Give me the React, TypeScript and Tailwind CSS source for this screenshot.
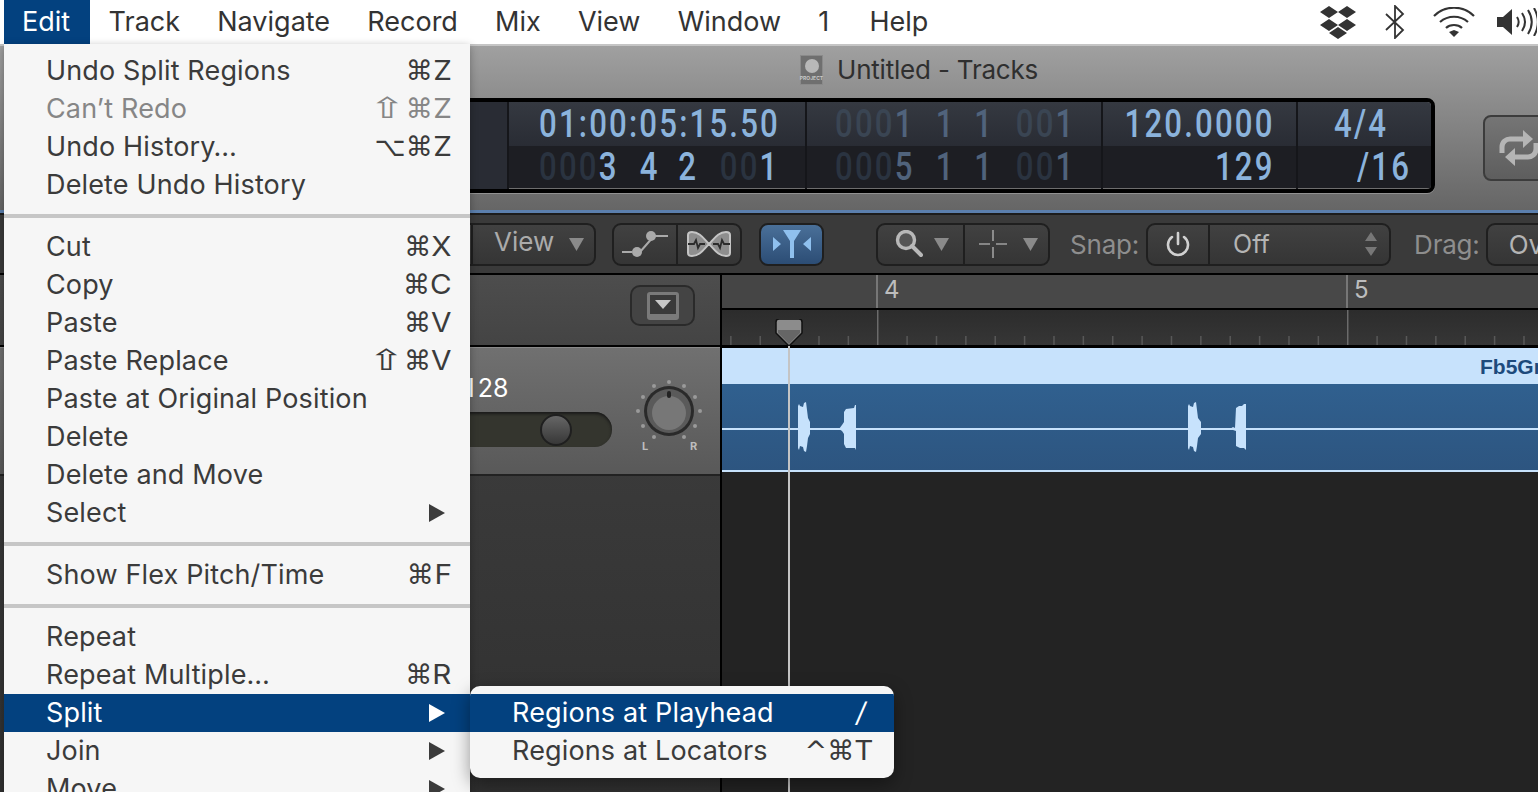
import React from 'react';

const ui = "font-['Inter','Noto_Sans',sans-serif]";
const lcd = "font-['Roboto',sans-serif]";

const topMenus = ['Track', 'Navigate', 'Record', 'Mix', 'View', 'Window', '1', 'Help'];

type MenuRow = { label: string; keys?: string; disabled?: boolean; arrow?: boolean; active?: boolean };

const groups: MenuRow[][] = [
  [
    { label: 'Undo Split Regions', keys: '⌘Z' },
    { label: 'Can’t Redo', keys: '⇧⌘Z', disabled: true },
    { label: 'Undo History…', keys: '⌥⌘Z' },
    { label: 'Delete Undo History' },
  ],
  [
    { label: 'Cut', keys: '⌘X' },
    { label: 'Copy', keys: '⌘C' },
    { label: 'Paste', keys: '⌘V' },
    { label: 'Paste Replace', keys: '⇧⌘V' },
    { label: 'Paste at Original Position' },
    { label: 'Delete' },
    { label: 'Delete and Move' },
    { label: 'Select', arrow: true },
  ],
  [{ label: 'Show Flex Pitch/Time', keys: '⌘F' }],
  [
    { label: 'Repeat' },
    { label: 'Repeat Multiple…', keys: '⌘R' },
    { label: 'Split', arrow: true, active: true },
    { label: 'Join', arrow: true },
    { label: 'Move', arrow: true },
  ],
];

const Keys = ({ value }: { value: string }) => (
  <span className="flex items-center">
    {Array.from(value).map((ch, i) =>
      /[A-Z/]/.test(ch) ? (
        <span key={i} className="ml-[2px] scale-x-110 origin-right">{ch}</span>
      ) : ch === '⇧' ? (
        <span key={i} className="inline-block mr-[6px] font-['DejaVu_Sans',sans-serif] text-[29px] scale-x-[1.5]">{ch}</span>
      ) : (
        <span key={i} className="font-['DejaVu_Sans',sans-serif] text-[27px]">{ch}</span>
      )
    )}
  </span>
);

const Row = ({ row }: { row: MenuRow }) => (
  <div
    className={`h-[38px] shrink-0 pl-[42px] pr-[18px] flex items-center justify-between ${
      row.active ? 'bg-[#03417f] text-white' : row.disabled ? 'text-[#868686]' : 'text-[#3b3b3b]'
    }`}
  >
    <span>{row.label}</span>
    {row.keys && <Keys value={row.keys} />}
    {row.arrow && (
      <svg width="18" height="20" viewBox="0 0 18 20" className="mr-[6px]">
        <path d="M1 1l16 9-16 9z" fill={row.active ? '#fff' : '#3b3b3b'} />
      </svg>
    )}
  </div>
);

const EditMenu = () => (
  <div className={`absolute left-[4px] top-[44px] w-[466px] h-[760px] pt-[8px] bg-[#f6f6f6] text-[27px] tracking-[0.15px] flex flex-col overflow-hidden shadow-[0_2px_8px_rgba(0,0,0,0.3)] ${ui}`}>
    {groups.map((g, i) => (
      <React.Fragment key={i}>
        {i > 0 && (
          <div className="h-[24px] shrink-0 flex items-center">
            <div className="h-[4px] w-full bg-[#c6c6c6]" />
          </div>
        )}
        {g.map((r) => <Row key={r.label} row={r} />)}
      </React.Fragment>
    ))}
  </div>
);

const SubMenu = () => (
  <div className={`absolute left-[470px] top-[686px] w-[424px] h-[92px] pt-[8px] rounded-[10px] bg-[#f6f6f6] text-[27px] tracking-[0.15px] text-[#3b3b3b] shadow-[0_6px_18px_rgba(0,0,0,0.4)] overflow-hidden ${ui}`}>
    <div className="h-[38px] pl-[42px] pr-[28px] flex items-center justify-between bg-[#03417f] text-white">
      <span>Regions at Playhead</span>
      <span className="italic">/</span>
    </div>
    <div className="h-[38px] pl-[42px] pr-[20px] flex items-center justify-between">
      <span>Regions at Locators</span>
      <Keys value="^⌘T" />
    </div>
  </div>
);

const StatusIcons = () => (
  <div className="ml-auto flex items-center pr-[1px] text-[#333]">
    <svg width="38" height="34" viewBox="0 0 38 34" fill="#333">
      <path d="M10 1l9 6-9 6-9-6zM28 1l9 6-9 6-9-6zM10 14l9 6-9 6-9-6zM28 14l9 6-9 6-9-6zM19 22l9 6-9 6-9-6z" />
    </svg>
    <svg width="20" height="34" viewBox="0 0 20 34" fill="none" stroke="#333" strokeWidth="1.8" className="ml-[28px]">
      <path d="M1 9l17 16-8 8V1l8 8L1 25" />
    </svg>
    <svg width="42" height="30" viewBox="0 0 42 30" fill="none" stroke="#333" strokeWidth="2.2" className="ml-[28px]">
      <path d="M1 9c11-11 29-11 40 0M7 15c8-7 20-7 28 0M13 21c4-4 12-4 16 0" />
      <path d="M16 25l5-2 5 2-5 5z" fill="#333" stroke="none" />
    </svg>
    <svg width="40" height="28" viewBox="0 0 40 28" fill="none" stroke="#333" strokeWidth="2" className="ml-[22px]">
      <path d="M0 9h6l9-8v26l-9-8H0z" fill="#333" stroke="none" />
      <path d="M20 9c2 3 2 7 0 10M25 5c4 6 4 12 0 18M31 2c5 8 5 16 0 24M37 0c5 9 5 19 0 28" />
    </svg>
  </div>
);

const MenuBar = () => (
  <div className={`h-[44px] shrink-0 bg-white flex items-center text-[27px] text-[#333] ${ui}`}>
    <div className="ml-[4px] h-full w-[86px] pl-[18px] flex items-center bg-[#03417f] text-white">Edit</div>
    {topMenus.map((m) => (
      <div key={m} className={`px-[18.6px] ${m === 'Help' ? 'ml-[3px]' : ''}`}>{m}</div>
    ))}
    <StatusIcons />
  </div>
);

const Dim = ({ children }: { children: React.ReactNode }) => <span className="text-[#3a4553]">{children}</span>;
const DimLow = ({ children }: { children: React.ReactNode }) => <span className="text-[#2a3340]">{children}</span>;
const Mid = ({ children }: { children: React.ReactNode }) => <span className="text-[#50637c]">{children}</span>;

// LCD digits are narrower than any installed face, so the row gets squeezed horizontally
const LcdText = ({ children, right }: { children: React.ReactNode; right?: boolean }) => (
  <span className={`inline-block whitespace-pre scale-x-[0.8] tracking-[2.7px] ${right ? 'origin-right' : 'origin-left'}`}>{children}</span>
);

const LcdCell = ({ width, top, bottom, pad = '' }: { width: string; top: React.ReactNode; bottom: React.ReactNode; pad?: string }) => (
  <div className={`${width} shrink-0 flex flex-col border-r-2 border-[#15161a] last:border-r-0 text-[39px] font-medium leading-none text-[#8bb3dc]`}>
    <div className={`h-[44px] flex items-center bg-gradient-to-b from-[#353941] to-[#292c34] ${pad}`}>{top}</div>
    <div className={`h-[42px] flex items-center bg-[#1d1e23] ${pad}`}>{bottom}</div>
  </div>
);

const G1 = "inline-block w-[126px]";
const G2 = "inline-block w-[48px]";
const G3 = "inline-block w-[52px]";

const Lcd = () => (
  <div className={`ml-[430px] mt-[52px] w-[1005px] h-[95px] flex rounded-r-[8px] border-[4px] border-black overflow-hidden shadow-[0_1px_0_rgba(255,255,255,0.25)] ${lcd}`}>
    <div className="w-[75px] shrink-0 bg-[#292c34] border-r-2 border-[#15161a]" />
    <LcdCell
      width="w-[298px]"
      pad="pl-[30px]"
      top={<LcdText>01:00:05:15.50</LcdText>}
      bottom={
        <LcdText>
          <span className={G1}><DimLow>000</DimLow>3</span>
          <span className={G2}>4</span>
          <span className={G3}>2</span>
          <DimLow>00</DimLow>1
        </LcdText>
      }
    />
    <LcdCell
      width="w-[296px]"
      pad="pl-[28px]"
      top={
        <LcdText>
          <span className={G1}><Dim>000</Dim><Mid>1</Mid></span>
          <span className={G2}><Mid>1</Mid></span>
          <span className={G3}><Mid>1</Mid></span>
          <Dim>00</Dim><Mid>1</Mid>
        </LcdText>
      }
      bottom={
        <LcdText>
          <span className={G1}><DimLow>000</DimLow><Mid>5</Mid></span>
          <span className={G2}><Mid>1</Mid></span>
          <span className={G3}><Mid>1</Mid></span>
          <DimLow>00</DimLow><Mid>1</Mid>
        </LcdText>
      }
    />
    <LcdCell
      width="w-[195px]"
      pad="justify-end pr-[21px]"
      top={<LcdText right>120.0000</LcdText>}
      bottom={<LcdText right>129</LcdText>}
    />
    <LcdCell
      width="w-[133px]"
      top={<span className="pl-[36px]"><LcdText>4/4</LcdText></span>}
      bottom={<span className="pl-[59px]"><LcdText>/16</LcdText></span>}
    />
  </div>
);

const LoopIcon = () => (
  <svg width="44" height="38" viewBox="0 0 44 38" fill="none" stroke="#b5b5b5" strokeWidth="5">
    <path d="M5 24v-6c0-5 4-8 8-8h16M39 14v6c0 5-4 8-8 8H15" />
    <path d="M26 1l10 9-10 9zM18 19l-10 9 10 9z" fill="#b5b5b5" stroke="none" />
  </svg>
);

const TitleArea = () => (
  <div className="h-[166px] shrink-0 relative bg-gradient-to-b from-[#a0a0a0] to-[#666] border-t-2 border-[#c5c5c5] overflow-hidden">
    <div className={`absolute left-[800px] top-[4px] flex items-center text-[26px] tracking-[-0.2px] text-[#2f2f2f] ${ui}`}>
      <div className="w-[23px] h-[30px] mr-[14px] bg-[#6f6f6f] border border-[#8a8a8a] flex flex-col items-center pt-[3px]">
        <div className="w-[14px] h-[14px] rounded-full bg-[#b8b8b8] shrink-0" />
        <div className="mt-[2px] text-[5px] leading-[6px] tracking-normal font-bold text-[#c8c8c8]">PROJECT</div>
      </div>
      Untitled - Tracks
    </div>
    <Lcd />
    <div className="absolute left-[1483px] top-[69px] w-[80px] h-[66px] rounded-[8px] border-2 border-[#3c3c3c] bg-gradient-to-b from-[#757575] to-[#5e5e5e] pl-[12px] pt-[12px]">
      <LoopIcon />
    </div>
  </div>
);

const toolBtn = 'h-[43px] rounded-[9px] border-2 border-[#1f1f1f] bg-gradient-to-b from-[#414141] to-[#353535] flex items-center overflow-hidden shrink-0';
const Arrow = ({ className = '' }: { className?: string }) => (
  <svg width="15" height="14" viewBox="0 0 15 14" className={className}>
    <path d="M0 1h15L7.5 14z" fill="#8a8a8a" />
  </svg>
);

const Toolbar = () => (
  <div className={`h-[60px] shrink-0 bg-[#3a3a3a] border-t-2 border-[#1c1c1c] flex items-center pl-[430px] text-[26px] text-[#ababab] ${ui}`}>
    <div className={`${toolBtn} w-[166px]`}>
      <div className="w-[41px] h-full border-r-2 border-[#1f1f1f]" />
      <span className="ml-[21px] -mt-[5px]">View</span>
      <Arrow className="ml-[15px]" />
    </div>
    <div className={`${toolBtn} ml-[16px] w-[130px]`}>
      <div className="w-[64px] h-full border-r-2 border-[#1f1f1f] flex items-center justify-center">
        <svg width="46" height="32" viewBox="0 0 46 32" fill="none" stroke="#aaa" strokeWidth="2">
          <path d="M0 24h10M18 24l14-16M32 8h14" />
          <circle cx="15" cy="24" r="5" fill="#aaa" stroke="none" />
          <circle cx="29" cy="8" r="5" fill="#aaa" stroke="none" />
        </svg>
      </div>
      <div className="flex-1 flex items-center justify-center">
        <svg width="46" height="28" viewBox="0 0 46 28">
          <path d="M2 5q0-3 4-3c8 0 12 7 17 12-5 5-9 12-17 12q-4 0-4-3zM44 5q0-3-4-3c-8 0-12 7-17 12 5 5 9 12 17 12q4 0 4-3z" fill="#8e8e8e" stroke="#c4c4c4" strokeWidth="2" />
          <path d="M2 14h6l2-4 2 8 2-4h5M44 14h-6l-2-4-2 8-2-4h-5" stroke="#2c2c2c" strokeWidth="1.8" fill="none" />
        </svg>
      </div>
    </div>
    <div className="h-[43px] w-[65px] ml-[17px] rounded-[9px] border-2 border-[#1f1f1f] bg-gradient-to-b from-[#4a7099] to-[#2c4d75] flex items-center justify-center shrink-0">
      <svg width="38" height="28" viewBox="0 0 38 28" fill="#8fc0ee">
        <path d="M10 0h18l-7 11v17h-4V11zM0 7l8 7-8 7zM38 7l-8 7 8 7z" />
      </svg>
    </div>
    <div className={`${toolBtn} ml-[52px] w-[174px]`}>
      <div className="w-[87px] h-full border-r-2 border-[#1f1f1f] flex items-center pl-[17px]">
        <svg width="28" height="28" viewBox="0 0 28 28" fill="none" className="shrink-0">
          <circle cx="11" cy="10" r="8.5" fill="#555" stroke="#b8b8b8" strokeWidth="3.4" />
          <path d="M17 16l9 9" stroke="#b8b8b8" strokeWidth="4" strokeLinecap="round" />
        </svg>
        <Arrow className="ml-[11px]" />
      </div>
      <div className="flex-1 flex items-center pl-[14px]">
        <svg width="28" height="28" viewBox="0 0 28 28" stroke="#a0a0a0" strokeWidth="1.6" fill="none">
          <path d="M0 14h11M17 14h11M14 0v11M14 17v11" />
        </svg>
        <Arrow className="ml-[16px]" />
      </div>
    </div>
    <span className="ml-[20px] text-[#8e8e8e] tracking-[-0.2px]">Snap:</span>
    <div className={`${toolBtn} ml-[7px] w-[245px]`}>
      <div className="w-[62px] h-full border-r-2 border-[#1f1f1f] flex items-center justify-center">
        <svg width="24" height="26" viewBox="0 0 24 26" fill="none" stroke="#d0d0d0" strokeWidth="2.6" strokeLinecap="round">
          <path d="M12 2v11M6 6a10 10 0 1 0 12 0" />
        </svg>
      </div>
      <span className="ml-[23px] mt-[2px] text-[25px] text-[#b4b4b4]">Off</span>
      <svg width="12" height="24" viewBox="0 0 12 24" fill="#777" className="ml-auto mr-[12px]">
        <path d="M6 0l6 9H0zM6 24l6-9H0z" />
      </svg>
    </div>
    <span className="ml-[23px] text-[#8e8e8e] tracking-[-0.2px]">Drag:</span>
    <div className={`${toolBtn} ml-[6px] w-[120px] pl-[21px] text-[#b4b4b4]`}>Ov</div>
  </div>
);

const PanKnob = () => (
  <svg width="70" height="84" viewBox="0 0 70 84" className="shrink-0">
    {[[35,3],[20,7],[50,7],[9,18],[61,18],[4,32],[66,32],[9,47],[61,47],[20,58],[50,58]].map(([x, y]) => (
      <circle key={`${x}-${y}`} cx={x} cy={y} r="2" fill="#9a9a9a" />
    ))}
    <circle cx="35" cy="32" r="25" fill="#2a2a2a" />
    <circle cx="35" cy="32" r="22" fill="#5a5a5a" />
    <circle cx="35" cy="34" r="17" fill="#777" />
    <rect x="33" y="12" width="4" height="7" rx="2" fill="#222" />
    <text x="8" y="71" fontSize="11" fontWeight="700" fill="#bdbdbd" fontFamily="Inter">L</text>
    <text x="56" y="71" fontSize="11" fontWeight="700" fill="#bdbdbd" fontFamily="Inter">R</text>
  </svg>
);

const LeftPanel = () => (
  <div className="w-[722px] shrink-0 flex flex-col border-r-2 border-black bg-gradient-to-b from-[#404040] to-[#303030]">
    <div className="h-[72px] shrink-0 bg-gradient-to-b from-[#4d4d4d] to-[#444] flex items-center justify-end pr-[25px] border-b-2 border-black">
      <div className="w-[65px] h-[41px] -mt-[9px] rounded-[10px] border-2 border-[#2a2a2a] bg-[#444] flex items-center justify-center">
        <div className="w-[32px] h-[28px] rounded-[3px] bg-[#7a7a7a] pt-[3px] px-[3px] pb-[6px]">
          <div className="w-full h-full bg-[#3a3a3a] flex items-center justify-center">
            <svg width="16" height="9" viewBox="0 0 16 9"><path d="M0 0h16L8 9z" fill="#c8c8c8" /></svg>
          </div>
        </div>
      </div>
    </div>
    <div className="h-[129px] shrink-0 bg-gradient-to-b from-[#707070] to-[#595959] border-t border-[#8a8a8a] border-b-2 border-b-[#222] pl-[472px] pr-[16px] flex justify-between">
      <div className="flex flex-col w-[140px]">
        <span className={`mt-[25px] -ml-[4px] text-[25px] leading-[30px] text-white ${ui}`}><span className="mr-[3px]">I</span>28</span>
        <div className="mt-[9px] -ml-[10px] h-[35px] rounded-r-full bg-[#34352e] shadow-[inset_0_2px_3px_#1a1a1a] flex items-center justify-end pr-[40px]">
          <div className="w-[32px] h-[32px] rounded-full bg-gradient-to-b from-[#666] to-[#383838] border-2 border-[#1f1f1f]" />
        </div>
      </div>
      <div className="mt-[31px]">
        <PanKnob />
      </div>
    </div>
  </div>
);

const Ruler = () => (
  <div className="shrink-0">
    <div className={`h-[35px] bg-[#454545] border-b-2 border-black flex text-[24px] text-[#bdbdbd] ${ui}`}>
      <div className="w-[156px] shrink-0 border-r-2 border-[#777]" />
      <div className="w-[470px] shrink-0 pl-[6px] border-r-2 border-[#777] bg-[#484848] leading-[30px]">4</div>
      <div className="pl-[6px] leading-[30px]">5</div>
    </div>
    <div className="h-[38px] bg-gradient-to-b from-[#2c2c2c] to-[#363636] border-b-[3px] border-black">
      <svg width="816" height="35" viewBox="0 0 816 35" className="block">
        {Array.from({ length: 28 }, (_, i) => {
          const x = 8.1 + i * 29.375;
          const major = i % 16 === 5;
          return <rect key={i} x={x} y={major ? 0 : 26} width="1.5" height={major ? 35 : 9} fill={major ? '#6b6b6b' : '#585858'} />;
        })}
      </svg>
    </div>
  </div>
);

const Blob = ({ x, d }: { x: number; d: string }) => <path transform={`translate(${x} 0)`} d={d} fill="#c7e2fc" />;

const Region = () => (
  <div className="h-[124px] shrink-0 flex flex-col">
    <div className="h-[36px] shrink-0 bg-[#c7e2fc] whitespace-nowrap overflow-hidden pl-[758px] font-['Liberation_Sans',sans-serif] font-bold text-[21px] leading-[38px] text-[#1d4a7c]">
      Fb5Gr
    </div>
    <div className="flex-1 bg-gradient-to-b from-[#30608f] to-[#2d5580] border-b-2 border-[#c7e2fc]">
      <svg width="816" height="86" viewBox="0 0 816 86" className="block">
        <rect x="0" y="44" width="816" height="2" fill="#c7e2fc" />
        <Blob x={76} d="M0 22L1 20L2 22L5 23L6 19L8 18L9 26L10 34L12 38V50L10 54L9 62L8 68L6 67L5 63L2 62L1 66L0 64z" />
        <Blob x={116} d="M1 45L4 41L6 38L6 28L8 25L16 24L17 21L18 21V66L17 64L8 64L6 60L6 50L4 47z" />
        <Blob x={466} d="M0 22L1 20L2 22L5 23L6 19L8 18L9 26L10 34L13 38V50L10 54L9 62L8 68L6 67L5 63L2 62L1 66L0 64z" />
        <Blob x={508} d="M0 45L3 43L5 44L6 24L9 22L12 22L14 20L16 20V66L14 64L10 64L6 62L6 47L3 46z" />
      </svg>
    </div>
  </div>
);

const Playhead = () => (
  <div className="absolute left-[775px] top-[319px] w-[28px] h-[473px] flex flex-col items-center pointer-events-none">
    <svg width="28" height="27" viewBox="0 0 28 27" className="shrink-0">
      <path d="M4 0h20a3 3 0 0 1 3 3v11L14 27 1 14V3a3 3 0 0 1 3-3z" fill="#8c8c8c" stroke="#111" strokeWidth="1.5" />
      <path d="M3 11h22v3L14 25 3 14z" fill="#666" />
    </svg>
    <div className="w-[2px] flex-1 bg-[#c4c4c4]" />
  </div>
);

export default function App() {
  return (
    <div className="relative w-[1538px] h-[792px] overflow-hidden bg-[#232323] flex flex-col">
      <MenuBar />
      <TitleArea />
      <div className="h-[3px] shrink-0 bg-[#5b7fad]" />
      <Toolbar />
      <div className="h-[2px] shrink-0 bg-black" />
      <div className="flex-1 flex min-h-0">
        <LeftPanel />
        <div className="flex-1 min-w-0 flex flex-col overflow-hidden">
          <Ruler />
          <Region />
        </div>
      </div>
      <Playhead />
      <EditMenu />
      <SubMenu />
    </div>
  );
}
